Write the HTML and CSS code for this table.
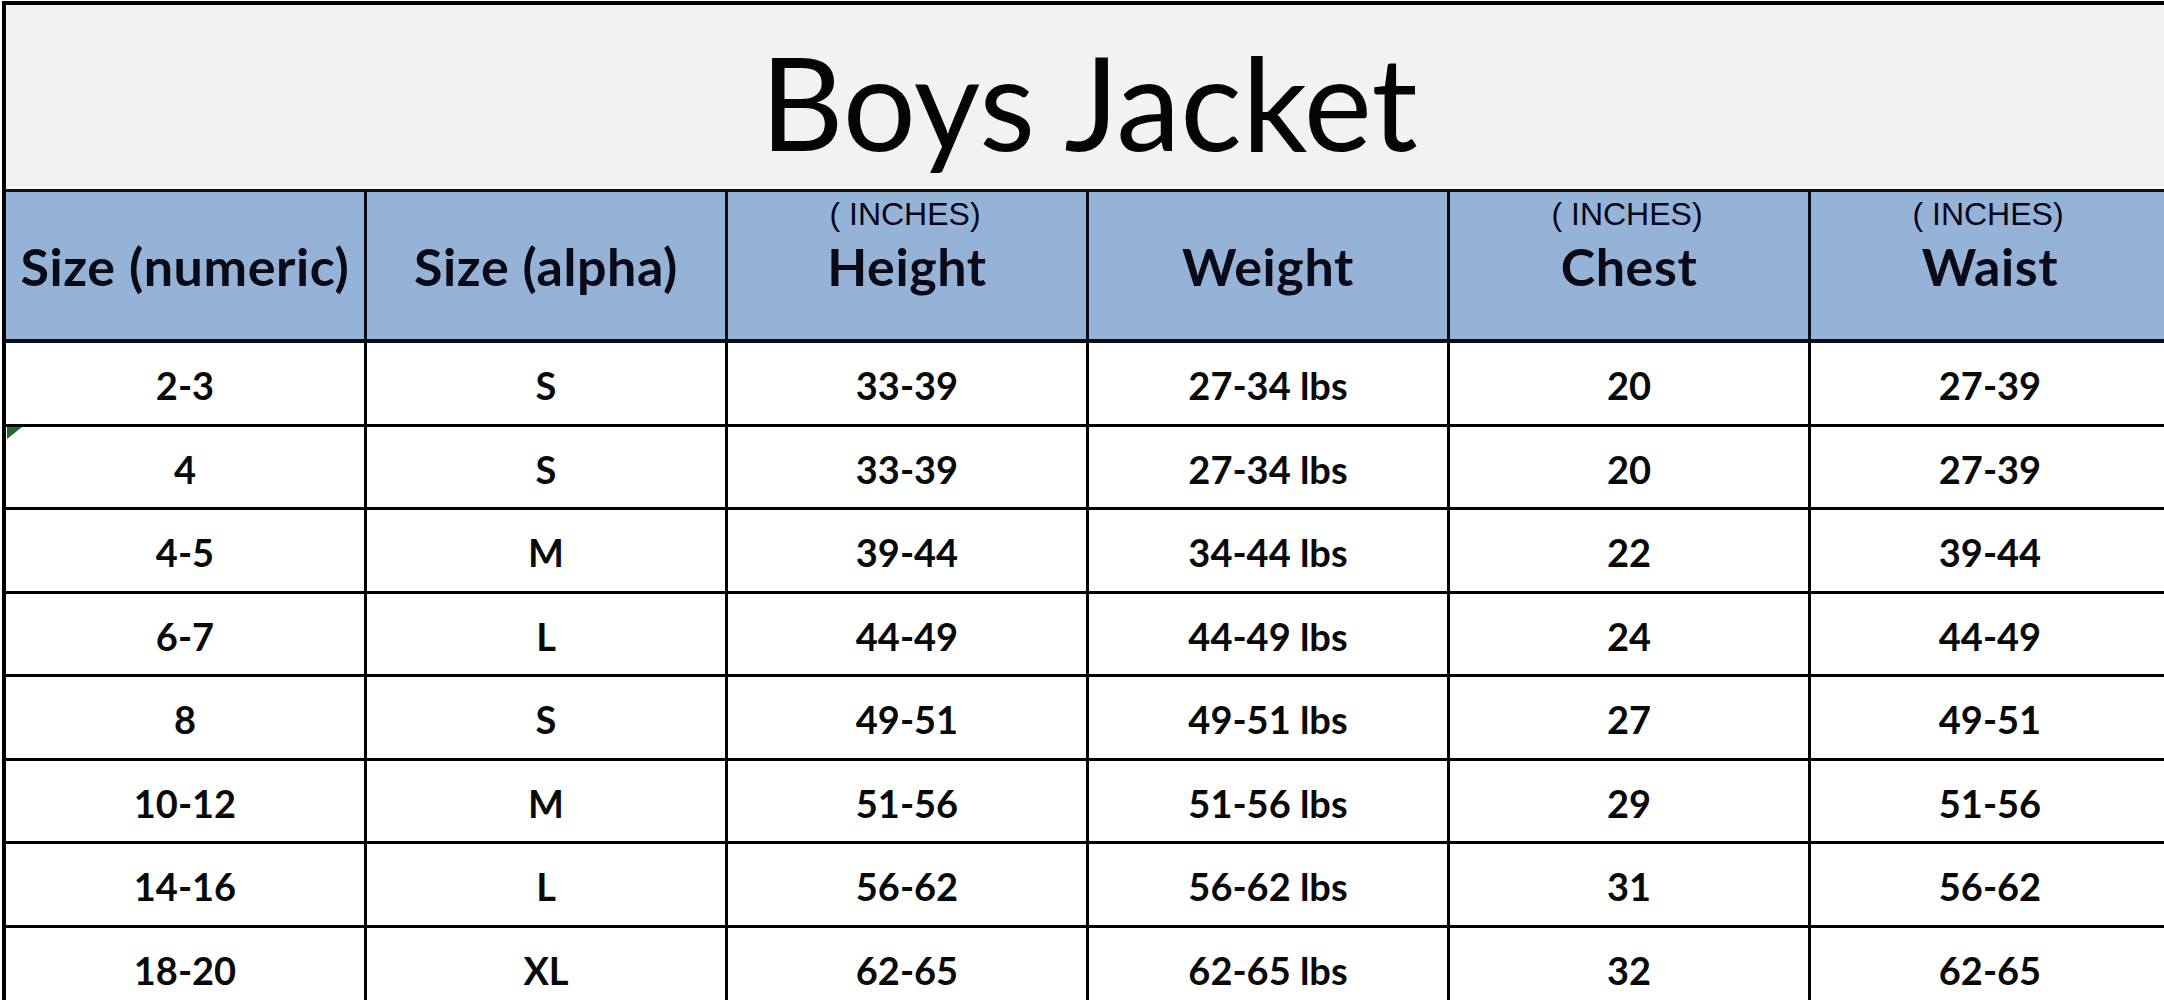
FILE: index.html
```html
<!DOCTYPE html>
<html lang="en">
<head>
<meta charset="utf-8">
<title>Boys Jacket</title>
<link rel="stylesheet" href="styles.css">
</head>
<body>
<div class="sheet">
  <div class="title">Boys Jacket</div>
  <div class="grid">
    <div class="hcell"><span class="label">Size (numeric)</span></div>
    <div class="hcell"><span class="label">Size (alpha)</span></div>
    <div class="hcell"><span class="note">( INCHES)</span><span class="label">Height</span></div>
    <div class="hcell"><span class="label">Weight</span></div>
    <div class="hcell"><span class="note">( INCHES)</span><span class="label">Chest</span></div>
    <div class="hcell"><span class="note">( INCHES)</span><span class="label">Waist</span></div>

    <div class="cell">2-3</div><div class="cell">S</div><div class="cell">33-39</div><div class="cell">27-34 lbs</div><div class="cell">20</div><div class="cell">27-39</div>
    <div class="cell flagged">4</div><div class="cell">S</div><div class="cell">33-39</div><div class="cell">27-34 lbs</div><div class="cell">20</div><div class="cell">27-39</div>
    <div class="cell">4-5</div><div class="cell">M</div><div class="cell">39-44</div><div class="cell">34-44 lbs</div><div class="cell">22</div><div class="cell">39-44</div>
    <div class="cell">6-7</div><div class="cell">L</div><div class="cell">44-49</div><div class="cell">44-49 lbs</div><div class="cell">24</div><div class="cell">44-49</div>
    <div class="cell">8</div><div class="cell">S</div><div class="cell">49-51</div><div class="cell">49-51 lbs</div><div class="cell">27</div><div class="cell">49-51</div>
    <div class="cell">10-12</div><div class="cell">M</div><div class="cell">51-56</div><div class="cell">51-56 lbs</div><div class="cell">29</div><div class="cell">51-56</div>
    <div class="cell">14-16</div><div class="cell">L</div><div class="cell">56-62</div><div class="cell">56-62 lbs</div><div class="cell">31</div><div class="cell">56-62</div>
    <div class="cell">18-20</div><div class="cell">XL</div><div class="cell">62-65</div><div class="cell">62-65 lbs</div><div class="cell">32</div><div class="cell">62-65</div>
  </div>
</div>
</body>
</html>
```

FILE: styles.css
```css
html, body {
  margin: 0;
  padding: 0;
  background: #ffffff;
  overflow: hidden;
}

body {
  font-family: Lato, "Open Sans", sans-serif;
  color: #0b0b14;
}

.sheet {
  margin: 1px 0 0 2px;
  width: 2200px;
  border-top: 4px solid #000;
  border-left: 4px solid #000;
}

.title {
  height: 184px;
  background: #f2f2f2;
  border-bottom: 2px solid #fbfbfb;
  display: flex;
  align-items: center;
  justify-content: center;
  box-sizing: border-box;
  padding: 10px 0 0 0;
  margin-right: 34px;
  font-size: 129px;
  font-weight: 400;
  line-height: 1;
  color: #050505;
}

.grid {
  display: grid;
  grid-template-columns: repeat(6, 361px);
  border-top: 3px solid #111;
}

.hcell {
  height: 147px;
  background: #95b3d7;
  border-right: 3px solid #0c0c18;
  border-bottom: 4px solid #0c0c18;
  display: grid;
  grid-template-rows: 1fr auto 1fr;
  justify-items: center;
}

.hcell .label {
  grid-row: 2;
  font-size: 52px;
  letter-spacing: 0.6px;
  font-weight: 700;
  line-height: 1.2;
  color: #0a0a16;
  padding-top: 1px;
}

.hcell .note {
  grid-row: 1;
  align-self: end;
  margin-bottom: 1px;
  margin-right: 4px;
  font-family: "Liberation Sans", Arial, sans-serif;
  font-size: 32px;
  line-height: 1.15;
  color: #05051a;
}

.cell {
  height: 83.5px;
  box-sizing: border-box;
  border-right: 3px solid #000;
  border-bottom: 3px solid #000;
  display: flex;
  align-items: center;
  justify-content: center;
  padding-top: 4px;
  font-size: 38px;
  font-weight: 700;
  color: #0a0a0a;
  position: relative;
}

.flagged::before {
  content: "";
  position: absolute;
  left: 1px;
  top: 0;
  width: 0;
  height: 0;
  border-top: 12px solid #1f6b2c;
  border-right: 15px solid transparent;
}
```
